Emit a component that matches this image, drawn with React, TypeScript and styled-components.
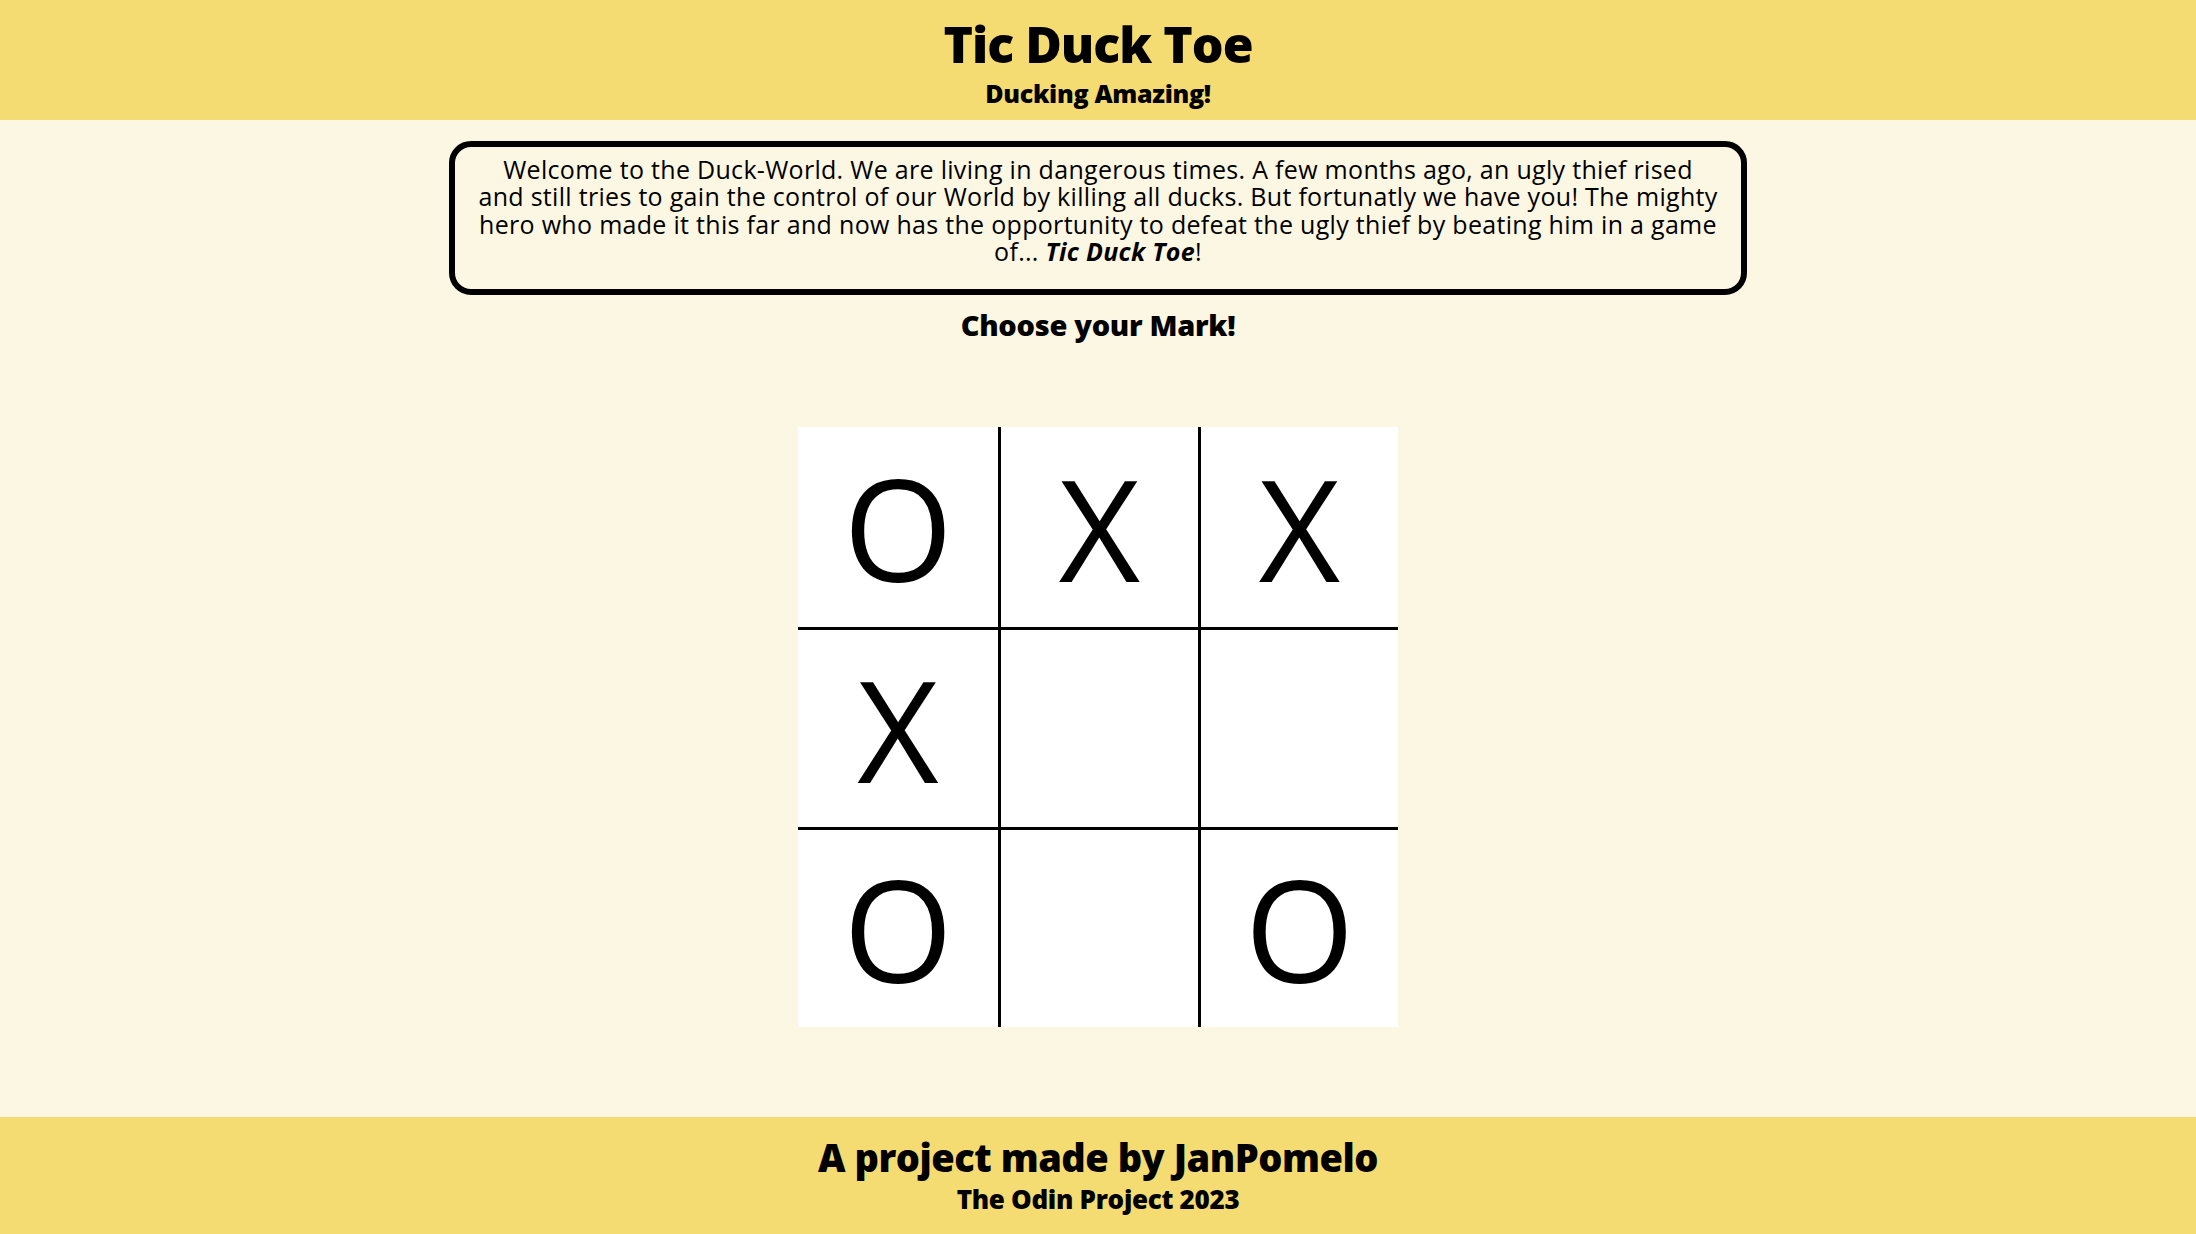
import React from "react";
import styled, { createGlobalStyle } from "styled-components";

const GlobalStyle = createGlobalStyle`
  * { box-sizing: border-box; }
  body {
    margin: 0;
    background: #fcf7e3;
    font-family: "Open Sans", "DejaVu Sans", sans-serif;
    color: #000;
  }
`;

const Page = styled.div`
  min-height: 100vh;
  display: flex;
  flex-direction: column;
`;

const Header = styled.header`
  height: 120px;
  background: #f4dc73;
  display: flex;
  flex-direction: column;
  align-items: center;
  padding-top: 19px;
  gap: 12px;
`;

const Title = styled.h1`
  margin: 0;
  font-size: 50px;
  line-height: 1;
  font-weight: 800;
  letter-spacing: -1px;
`;

const Subtitle = styled.h2`
  margin: 0;
  font-size: 25px;
  line-height: 1;
  font-weight: 800;
  letter-spacing: -0.3px;
`;

const Main = styled.main`
  flex: 1;
  display: flex;
  flex-direction: column;
  align-items: center;
  padding-top: 21px;
`;

const Intro = styled.p`
  margin: 0;
  width: 1298px;
  height: 154px;
  border: 6px solid #000;
  border-radius: 22px;
  padding: 9px 12px;
  text-align: center;
  font-size: 25px;
  line-height: 27.3px;
  letter-spacing: 0.3px;
  white-space: nowrap;
`;

const Choose = styled.h3`
  margin: 13px 0 0;
  font-size: 29px;
  line-height: 34px;
  font-weight: 800;
  letter-spacing: -0.3px;
`;

const Board = styled.div`
  margin-top: 85px;
  width: 600px;
  height: 600px;
  display: grid;
  grid-template-columns: 200px 197px 197px;
  grid-template-rows: 200px 197px 197px;
  gap: 3px;
  background: #000;
`;

const Cell = styled.div`
  background: #fff;
  display: flex;
  align-items: center;
  justify-content: center;
  font-family: "Open Sans", "Liberation Sans", sans-serif;
  font-weight: 500;
  font-size: 141px;
  line-height: 1;
`;

const Footer = styled.footer`
  height: 117px;
  background: #f4dc73;
  display: flex;
  flex-direction: column;
  align-items: center;
  padding-top: 21px;
  gap: 10px;
`;

const Credit = styled.div`
  font-size: 38px;
  line-height: 1;
  font-weight: 800;
  letter-spacing: -0.5px;
`;

const Course = styled.div`
  font-size: 26px;
  line-height: 1;
  font-weight: 800;
  letter-spacing: -0.3px;
`;

const marks = ["O", "X", "X", "X", "", "", "O", "", "O"];

export default function App() {
  return (
    <>
      <GlobalStyle />
      <Page>
        <Header>
          <Title>Tic Duck Toe</Title>
          <Subtitle>Ducking Amazing!</Subtitle>
        </Header>
        <Main>
          <Intro>
            Welcome to the Duck-World. We are living in dangerous times. A few months ago, an ugly thief rised
            <br />
            and still tries to gain the control of our World by killing all ducks. But fortunatly we have you! The mighty
            <br />
            hero who made it this far and now has the opportunity to defeat the ugly thief by beating him in a game
            <br />
            of... <em><strong>Tic Duck Toe</strong></em>!
          </Intro>
          <Choose>Choose your Mark!</Choose>
          <Board>
            {marks.map((m, i) => (
              <Cell key={i}>{m}</Cell>
            ))}
          </Board>
        </Main>
        <Footer>
          <Credit>A project made by JanPomelo</Credit>
          <Course>The Odin Project 2023</Course>
        </Footer>
      </Page>
    </>
  );
}
